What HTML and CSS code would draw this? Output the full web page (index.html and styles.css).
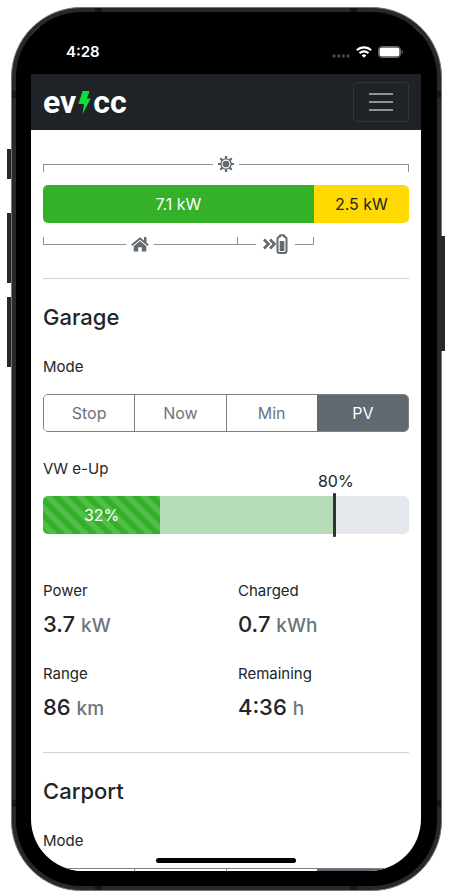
FILE: index.html
```html
<!DOCTYPE html>
<html lang="en">
<head>
<meta charset="utf-8">
<meta name="viewport" content="width=device-width, initial-scale=1">
<title>evcc</title>
<link rel="stylesheet" href="styles.css">
</head>
<body>
<div class="phone">
  <span class="key key-mute"></span>
  <span class="key key-up"></span>
  <span class="key key-down"></span>
  <span class="key key-power"></span>
  <div class="bezel">
    <div class="screen">
      <div class="status">
        <span class="clock">4:28</span>
        <div class="signals">
          <svg width="18" height="4" viewBox="0 0 18 4" fill="#454545"><circle cx="2" cy="2" r="1.7"/><circle cx="6.700" cy="2" r="1.7"/><circle cx="11.300" cy="2" r="1.7"/><circle cx="16" cy="2" r="1.7"/></svg>
          <svg width="16" height="12" viewBox="0 0 16 12" fill="none" stroke="#fff" stroke-width="2.100"><path d="M.9 4.300a10 10 0 0 1 14.200 0M3.500 7.200a6.400 6.400 0 0 1 9 0"/><path d="M8 11.700 5.700 9.400a3.300 3.300 0 0 1 4.600 0z" fill="#fff" stroke="none"/></svg>
          <svg width="25" height="12" viewBox="0 0 25 12"><rect x=".5" y=".5" width="22" height="11" rx="3.200" fill="none" stroke="#6a6a6a"/><rect x="1.500" y="1.500" width="20" height="9" rx="2" fill="#fff"/><path d="M23.700 4v4c1.600-.7 1.600-3.300 0-4z" fill="#6a6a6a"/></svg>
        </div>
      </div>
      <header class="navbar">
        <a class="brand" href="#" aria-label="evcc"><span>ev</span><svg width="13" height="24" viewBox="0 0 13 24" fill="#0fdd3f"><path d="M4.500 1H11.600L8.900 8.600H12.700L4.600 24 6 14H.4z"/></svg><span>cc</span></a>
        <button class="toggler" type="button" aria-label="Menu"><span></span><span></span><span></span></button>
      </header>
      <main class="content">
        <section class="energy">
          <div class="bracket-row">
            <div class="bracket bracket-down">
              <i class="arm arm-start"></i>
              <svg class="sun" width="16" height="16" viewBox="0 0 16 16"><g stroke="#616971" stroke-width="2.200"><path d="M8 0v4M8 12v4M0 8h4M12 8h4M2.300 2.300l2.800 2.800M10.900 10.900l2.800 2.800M2.300 13.700l2.800-2.800M10.900 5.100l2.800-2.800"/></g><circle cx="8" cy="8" r="5.800" fill="#616971"/><circle cx="8" cy="8" r="3.900" fill="none" stroke="#fff" stroke-width="1.100"/></svg>
              <i class="arm arm-end"></i>
            </div>
          </div>
          <div class="power-bar">
            <div class="own">7.1 kW</div>
            <div class="export">2.5 kW</div>
          </div>
          <div class="bracket-row">
            <div class="bracket bracket-up home">
              <i class="arm arm-start"></i>
              <svg width="18" height="15" viewBox="0 0 18 15"><path d="M.8 8.300 9 1.500l8.200 6.800" fill="none" stroke="#616971" stroke-width="2"/><path d="M13 0h2.500v6L13 4zM9 4 15.300 9.200V14.500H10.800V10.300H7.200V14.500H2.700V9.200z" fill="#616971"/></svg>
              <i class="arm"></i>
            </div>
            <div class="bracket bracket-up car">
              <i class="arm arm-start"></i>
              <svg width="25" height="20" viewBox="0 0 25 20" fill="none" stroke="#616971"><path d="M1 5.500 5.500 10 1 14.500M7 5.500 11.500 10 7 14.500" stroke-width="2.700"/><path d="M17 2.500V1.200h4v1.300q2.500.4 2.500 2.500v12q0 2-2 2h-5q-2 0-2-2V5q0-2.100 2.500-2.500z" stroke-width="2" stroke-linejoin="round"/><path d="M16.700 7h4.600v10h-4.600z" fill="#616971" stroke="none"/></svg>
              <i class="arm arm-end"></i>
            </div>
          </div>
        </section>
        <hr>
        <section>
          <h2>Garage</h2>
          <div class="label" id="mode-garage">Mode</div>
          <div class="modes" role="group" aria-labelledby="mode-garage">
            <button type="button">Stop</button>
            <button type="button">Now</button>
            <button type="button">Min</button>
            <button type="button" class="active" aria-pressed="true">PV</button>
          </div>
          <label class="label vehicle" for="target">VW e-Up</label>
          <div class="soc">
            <div class="soc-track">
              <div class="soc-current">32%</div>
              <div class="soc-goal"></div>
            </div>
            <output class="soc-label" for="target">80%</output>
            <input id="target" class="soc-target" type="range" min="0" max="100" value="80">
          </div>
          <dl class="values">
            <div><dt>Power</dt><dd>3.7 <small>kW</small></dd></div>
            <div><dt>Charged</dt><dd>0.7 <small>kWh</small></dd></div>
            <div><dt>Range</dt><dd>86 <small>km</small></dd></div>
            <div><dt>Remaining</dt><dd>4:36 <small>h</small></dd></div>
          </dl>
        </section>
        <hr class="between">
        <section>
          <h2>Carport</h2>
          <div class="label" id="mode-carport">Mode</div>
          <div class="modes" role="group" aria-labelledby="mode-carport">
            <button type="button" aria-label="Stop"></button>
            <button type="button" aria-label="Now"></button>
            <button type="button" aria-label="Min"></button>
            <button type="button" aria-label="PV" class="active" aria-pressed="true"></button>
          </div>
        </section>
      </main>
      <span class="home-indicator"></span>
    </div>
  </div>
</div>
</body>
</html>
```
FILE: styles.css
```css
* {
  box-sizing: border-box;
}

body {
  margin: 0;
  height: 100vh;
  padding: 7px 10px 2px 11px;
  background: #fff;
  color: #212529;
  font: 16px/24px Inter, "Liberation Sans", sans-serif;
  overflow: hidden;
}

button,
input {
  font: inherit;
  margin: 0;
}

/* Device frame */
.phone {
  position: relative;
  height: 100%;
  padding: 4px;
  border: 1px solid #777;
  border-radius: 70px;
  background:
    linear-gradient(#161616, #161616) 83px 0 / 7px 100% no-repeat,
    linear-gradient(#161616, #161616) right 84px top 0 / 7px 100% no-repeat,
    linear-gradient(#161616, #161616) 0 83px / 100% 7px no-repeat,
    linear-gradient(#161616, #161616) left 0 bottom 83px / 100% 7px no-repeat,
    #282828;
}

.bezel {
  height: 100%;
  padding: 15px 16px 15px 15px;
  border-radius: 65px;
  background: #000;
  overflow: hidden;
}

.screen {
  position: relative;
  height: 100%;
  border-radius: 0 0 52px 52px;
  background: #fff;
  overflow: hidden;
}

.key {
  position: absolute;
  left: -5px;
  width: 4px;
  background: #282828;
}

.key-mute {
  top: 141px;
  height: 30px;
}

.key-up {
  top: 205px;
  height: 70px;
}

.key-down {
  top: 289px;
  height: 70px;
}

.key-power {
  left: auto;
  right: -4px;
  top: 228px;
  height: 115px;
}

.home-indicator {
  position: absolute;
  bottom: 8px;
  left: 50%;
  width: 140px;
  height: 5px;
  border-radius: 3px;
  background: #000;
  transform: translateX(-50%);
}

/* Status bar */
.status {
  display: flex;
  justify-content: space-between;
  align-items: center;
  height: 47px;
  padding: 2px 18px 0 35px;
  background: #000;
  color: #fff;
}

.clock {
  font-size: 15px;
  font-weight: 600;
}

.signals {
  display: flex;
  align-items: center;
  gap: 6px;
}

.signals svg:first-child {
  align-self: flex-end;
}

/* Header */
.navbar {
  display: flex;
  justify-content: space-between;
  align-items: center;
  height: 56px;
  padding: 0 12px;
  background: #1f2327;
}

.brand {
  display: flex;
  align-items: center;
  gap: 2px;
  color: #fff;
  font: 700 32px/40px Roboto, "Liberation Sans", sans-serif;
  text-decoration: none;
}

.toggler {
  display: flex;
  flex-direction: column;
  align-items: center;
  justify-content: center;
  gap: 6px;
  width: 56px;
  height: 40px;
  padding: 0;
  border: 1px solid #343739;
  border-radius: 4px;
  background: none;
}

.toggler span {
  width: 24px;
  height: 2px;
  background: #8f9193;
}

/* Content */
.content {
  padding: 22px 12px 0;
}

hr {
  height: 1px;
  margin: 22px 0 24px;
  border: 0;
  background: #d0d1d2;
}

hr.between {
  margin-top: 30px;
}

.bracket-row {
  display: flex;
  height: 24px;
}

.bracket {
  display: flex;
  flex: 1;
  align-items: center;
  gap: 5px;
}

.bracket svg {
  flex: none;
}

.home {
  flex: 0 0 53%;
}

.car {
  flex: 0 0 21%;
  gap: 7px;
}

.arm {
  flex: 1;
  height: 8px;
  border: 0 solid #8b9197;
}

.bracket-down .arm {
  margin-top: 7px;
  border-top-width: 1px;
}

.bracket-up .arm {
  margin-bottom: 6px;
  border-bottom-width: 1px;
}

.bracket .arm-start {
  border-left-width: 1px;
}

.bracket .arm-end {
  border-right-width: 1px;
}

.power-bar {
  display: flex;
  height: 38px;
  margin: 9px 0;
  border-radius: 5px;
  line-height: 38px;
  text-align: center;
  overflow: hidden;
}

.own {
  width: 74%;
  background: #34b129;
  color: #fff;
}

.export {
  flex: 1;
  background: #ffd900;
}

h2 {
  margin: 0 0 24px;
  font-size: 22px;
  font-weight: 500;
  line-height: 28px;
}

.label {
  display: block;
  margin-bottom: 15px;
}

.label,
dt {
  font-size: 15px;
}

.modes {
  display: flex;
  height: 38px;
  border: 1px solid #7a8188;
  border-radius: 5px;
  overflow: hidden;
}

.modes button {
  flex: 1;
  padding: 0;
  border: 0;
  border-left: 1px solid #7a8188;
  background: #fff;
  color: #6c757d;
}

.modes button:first-child {
  border-left: 0;
}

.modes .active {
  border-color: #616971;
  background: #616971;
  color: #fff;
}

.vehicle {
  margin-top: 25px;
}

.soc {
  position: relative;
}

.soc-track {
  display: flex;
  height: 38px;
  border-radius: 5px;
  background: #e5e9ed;
  line-height: 38px;
  text-align: center;
  overflow: hidden;
}

.soc-current {
  width: 32%;
  background: linear-gradient(45deg, rgba(255, 255, 255, .15) 25%, transparent 25%, transparent 50%, rgba(255, 255, 255, .15) 50%, rgba(255, 255, 255, .15) 75%, transparent 75%) 0 0 / 16px 16px #34b129;
  color: #fff;
}

.soc-goal {
  width: 48%;
  background: #b5dcb6;
}

.soc-label {
  position: absolute;
  bottom: 100%;
  left: 80%;
  margin-bottom: 3px;
  transform: translateX(-50%);
}

.soc-target {
  position: absolute;
  top: -3px;
  left: 0;
  width: 100%;
  height: 44px;
  appearance: none;
  background: none;
}

.soc-target::-webkit-slider-thumb {
  appearance: none;
  width: 3px;
  height: 44px;
  border-radius: 1px;
  background: #2e3439;
}

.values {
  display: grid;
  grid-template-columns: 195fr 171fr;
  row-gap: 23px;
  margin: 45px 0 0;
}

dd {
  margin: 6px 0 0;
  font-size: 22px;
  font-weight: 500;
  line-height: 30px;
}

small {
  color: #6c757d;
  font-size: 19px;
  line-height: 20px;
}
```
